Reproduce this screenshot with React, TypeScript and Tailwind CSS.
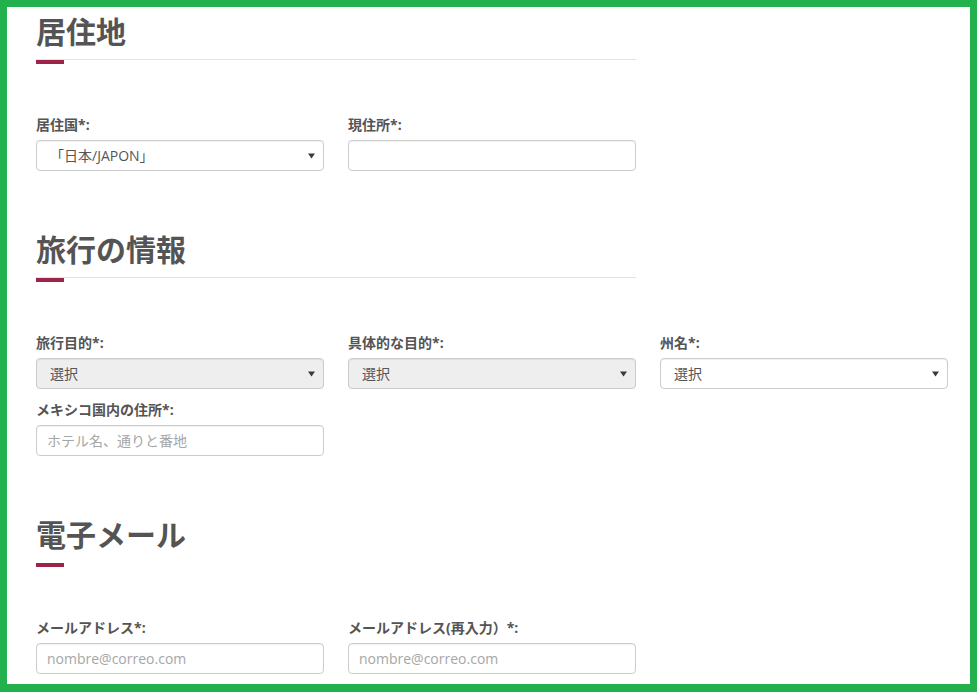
import React from "react";

const FONT = { fontFamily: '"Open Sans", "Noto Sans CJK JP", sans-serif' };

function Label({ children }: { children: React.ReactNode }) {
  return (
    <div className="text-[14px] font-bold leading-[18px] text-[#545454] whitespace-nowrap">
      {children}
    </div>
  );
}

function Arrow() {
  return (
    <svg width="7" height="6" viewBox="0 0 7 6" className="shrink-0">
      <path d="M0 0.5 L7 0.5 L3.5 5.5 Z" fill="#3a3a3a" />
    </svg>
  );
}

function SelectBox({ value, disabled }: { value: string; disabled?: boolean }) {
  return (
    <div
      className={
        "flex h-[31px] w-full items-center justify-between rounded-[4px] border border-[#cccccc] pl-[13px] pr-[8px] text-[14px] text-[#555555] shadow-[inset_0_1px_1px_rgba(0,0,0,0.06)] " +
        (disabled ? "bg-[#eeeeee]" : "bg-white")
      }
    >
      <span className="whitespace-nowrap">{value}</span>
      <Arrow />
    </div>
  );
}

function InputBox({ placeholder }: { placeholder?: string }) {
  return (
    <div className="flex h-[31px] w-full items-center rounded-[4px] border border-[#cccccc] bg-white pl-[10px] text-[14px] text-[#a6a6a6] shadow-[inset_0_1px_1px_rgba(0,0,0,0.06)]">
      <span className="whitespace-nowrap">{placeholder ?? ""}</span>
    </div>
  );
}

function Field({ label, children }: { label: string; children: React.ReactNode }) {
  return (
    <div className="flex flex-col gap-[6px]">
      <Label>{label}</Label>
      {children}
    </div>
  );
}

function Section({
  title,
  line = true,
  children,
  className = "",
}: {
  title: string;
  line?: boolean;
  children: React.ReactNode;
  className?: string;
}) {
  return (
    <section className={className}>
      <h2 className="text-[30px] font-bold leading-[36px] text-[#545454] whitespace-nowrap">{title}</h2>
      <div className={"mt-[9px] h-px w-[600px] " + (line ? "bg-[#e3e3e3]" : "bg-transparent")} />
      <div className="h-[4px] w-[28px] bg-[#9d2449]" />
      <div className="mt-[52px] grid grid-cols-[288px_288px_288px] gap-x-6 gap-y-3">{children}</div>
    </section>
  );
}

export default function App() {
  return (
    <div
      style={FONT}
      className="h-[692px] w-[977px] overflow-hidden border-x-[7px] border-t-[7px] border-b-[8px] border-[#22b14c] bg-white pl-[29px] pt-[7px]"
    >
      <Section title="居住地">
        <Field label="居住国*:">
          <SelectBox value="「日本/JAPON」" />
        </Field>
        <Field label="現住所*:">
          <InputBox />
        </Field>
      </Section>

      <Section title="旅行の情報" className="mt-[61px]">
        <Field label="旅行目的*:">
          <SelectBox value="選択" disabled />
        </Field>
        <Field label="具体的な目的*:">
          <SelectBox value="選択" disabled />
        </Field>
        <Field label="州名*:">
          <SelectBox value="選択" />
        </Field>
        <Field label="メキシコ国内の住所*:">
          <InputBox placeholder="ホテル名、通りと番地" />
        </Field>
      </Section>

      <Section title="電子メール" line={false} className="mt-[61px]">
        <Field label="メールアドレス*:">
          <InputBox placeholder="nombre@correo.com" />
        </Field>
        <Field label="メールアドレス(再入力）*:">
          <InputBox placeholder="nombre@correo.com" />
        </Field>
      </Section>
    </div>
  );
}
